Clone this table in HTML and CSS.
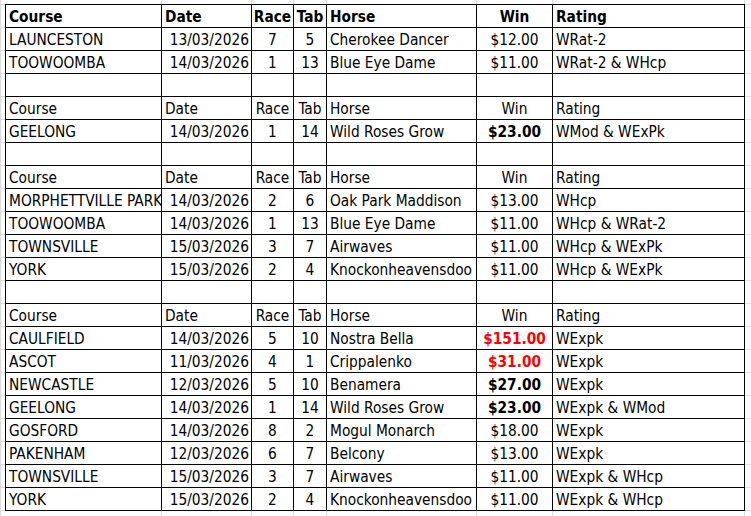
FILE: index.html
```html
<!DOCTYPE html>
<html>
<head>
<meta charset="utf-8">
<link rel="stylesheet" href="styles.css">
</head>
<body>
<div class="sheet">
<table class="grid">
<colgroup>
<col class="c-course"><col class="c-date"><col class="c-race"><col class="c-tab"><col class="c-horse"><col class="c-win"><col class="c-rating">
</colgroup>
<tbody>
<tr class="head bold"><td>Course</td><td>Date</td><td class="mid">Race</td><td class="mid">Tab</td><td>Horse</td><td class="mid">Win</td><td>Rating</td></tr>
<tr><td>LAUNCESTON</td><td class="num">13/03/2026</td><td class="mid">7</td><td class="mid">5</td><td>Cherokee Dancer</td><td class="mid">$12.00</td><td>WRat-2</td></tr>
<tr><td>TOOWOOMBA</td><td class="num">14/03/2026</td><td class="mid">1</td><td class="mid">13</td><td>Blue Eye Dame</td><td class="mid">$11.00</td><td>WRat-2 &amp; WHcp</td></tr>
<tr class="blank"><td></td><td></td><td></td><td></td><td></td><td></td><td></td></tr>
<tr class="head"><td>Course</td><td>Date</td><td class="mid">Race</td><td class="mid">Tab</td><td>Horse</td><td class="mid">Win</td><td>Rating</td></tr>
<tr><td>GEELONG</td><td class="num">14/03/2026</td><td class="mid">1</td><td class="mid">14</td><td>Wild Roses Grow</td><td class="mid strong">$23.00</td><td>WMod &amp; WExPk</td></tr>
<tr class="blank"><td></td><td></td><td></td><td></td><td></td><td></td><td></td></tr>
<tr class="head"><td>Course</td><td>Date</td><td class="mid">Race</td><td class="mid">Tab</td><td>Horse</td><td class="mid">Win</td><td>Rating</td></tr>
<tr><td>MORPHETTVILLE PARK</td><td class="num">14/03/2026</td><td class="mid">2</td><td class="mid">6</td><td>Oak Park Maddison</td><td class="mid">$13.00</td><td>WHcp</td></tr>
<tr><td>TOOWOOMBA</td><td class="num">14/03/2026</td><td class="mid">1</td><td class="mid">13</td><td>Blue Eye Dame</td><td class="mid">$11.00</td><td>WHcp &amp; WRat-2</td></tr>
<tr><td>TOWNSVILLE</td><td class="num">15/03/2026</td><td class="mid">3</td><td class="mid">7</td><td>Airwaves</td><td class="mid">$11.00</td><td>WHcp &amp; WExPk</td></tr>
<tr><td>YORK</td><td class="num">15/03/2026</td><td class="mid">2</td><td class="mid">4</td><td>Knockonheavensdoo</td><td class="mid">$11.00</td><td>WHcp &amp; WExPk</td></tr>
<tr class="blank"><td></td><td></td><td></td><td></td><td></td><td></td><td></td></tr>
<tr class="head"><td>Course</td><td>Date</td><td class="mid">Race</td><td class="mid">Tab</td><td>Horse</td><td class="mid">Win</td><td>Rating</td></tr>
<tr><td>CAULFIELD</td><td class="num">14/03/2026</td><td class="mid">5</td><td class="mid">10</td><td>Nostra Bella</td><td class="mid strong red">$151.00</td><td>WExpk</td></tr>
<tr><td>ASCOT</td><td class="num">11/03/2026</td><td class="mid">4</td><td class="mid">1</td><td>Crippalenko</td><td class="mid strong red">$31.00</td><td>WExpk</td></tr>
<tr><td>NEWCASTLE</td><td class="num">12/03/2026</td><td class="mid">5</td><td class="mid">10</td><td>Benamera</td><td class="mid strong">$27.00</td><td>WExpk</td></tr>
<tr><td>GEELONG</td><td class="num">14/03/2026</td><td class="mid">1</td><td class="mid">14</td><td>Wild Roses Grow</td><td class="mid strong">$23.00</td><td>WExpk &amp; WMod</td></tr>
<tr><td>GOSFORD</td><td class="num">14/03/2026</td><td class="mid">8</td><td class="mid">2</td><td>Mogul Monarch</td><td class="mid">$18.00</td><td>WExpk</td></tr>
<tr><td>PAKENHAM</td><td class="num">12/03/2026</td><td class="mid">6</td><td class="mid">7</td><td>Belcony</td><td class="mid">$13.00</td><td>WExpk</td></tr>
<tr><td>TOWNSVILLE</td><td class="num">15/03/2026</td><td class="mid">3</td><td class="mid">7</td><td>Airwaves</td><td class="mid">$11.00</td><td>WExpk &amp; WHcp</td></tr>
<tr><td>YORK</td><td class="num">15/03/2026</td><td class="mid">2</td><td class="mid">4</td><td>Knockonheavensdoo</td><td class="mid">$11.00</td><td>WExpk &amp; WHcp</td></tr>
</tbody>
</table>
</div>
</body>
</html>
```

FILE: styles.css
```css
html, body {
  margin: 0;
  padding: 0;
  background: #ffffff;
}

.sheet {
  width: 751px;
  height: 516px;
  box-sizing: border-box;
  padding: 4px 0 0 5px;
  overflow: hidden;
  background-color: #ffffff;
  background-image:
    repeating-linear-gradient(to bottom, #dcdcdc 0 1px, transparent 1px 23px),
    linear-gradient(#dcdcdc, #dcdcdc),
    linear-gradient(#dcdcdc, #dcdcdc),
    linear-gradient(#dcdcdc, #dcdcdc),
    linear-gradient(#dcdcdc, #dcdcdc),
    linear-gradient(#dcdcdc, #dcdcdc),
    linear-gradient(#dcdcdc, #dcdcdc),
    linear-gradient(#dcdcdc, #dcdcdc),
    linear-gradient(#dcdcdc, #dcdcdc);
  background-size: 100% 100%, 1px 100%, 1px 100%, 1px 100%, 1px 100%, 1px 100%, 1px 100%, 1px 100%, 1px 100%;
  background-repeat: no-repeat;
  background-position: 0 4px, 0 0, 161px 0, 251px 0, 293px 0, 326px 0, 476px 0, 552px 0, 744px 0;
}

.grid {
  border-collapse: collapse;
  table-layout: fixed;
  width: 740px;
  background: #ffffff;
  font-family: "DejaVu Sans Condensed", "DejaVu Sans", sans-serif;
  font-stretch: condensed;
  font-size: 15.3px;
  color: #000000;
}

.c-course { width: 156px; }
.c-date { width: 90px; }
.c-race { width: 42px; }
.c-tab { width: 33px; }
.c-horse { width: 150px; }
.c-win { width: 76px; }
.c-rating { width: 192px; }

.grid tr { height: 23px; }

.grid td {
  border: 1px solid #000000;
  padding: 3px 3px 0 3px;
  line-height: 19px;
  white-space: nowrap;
  overflow: hidden;
  vertical-align: bottom;
  text-align: left;
}

.grid td.mid { text-align: center; padding-left: 0; padding-right: 0; }
.grid td.num { text-align: right; padding-right: 2px; }

.bold td { font-weight: 700; }
.strong { font-weight: 700; }
.red { color: #ff0000; }
```
